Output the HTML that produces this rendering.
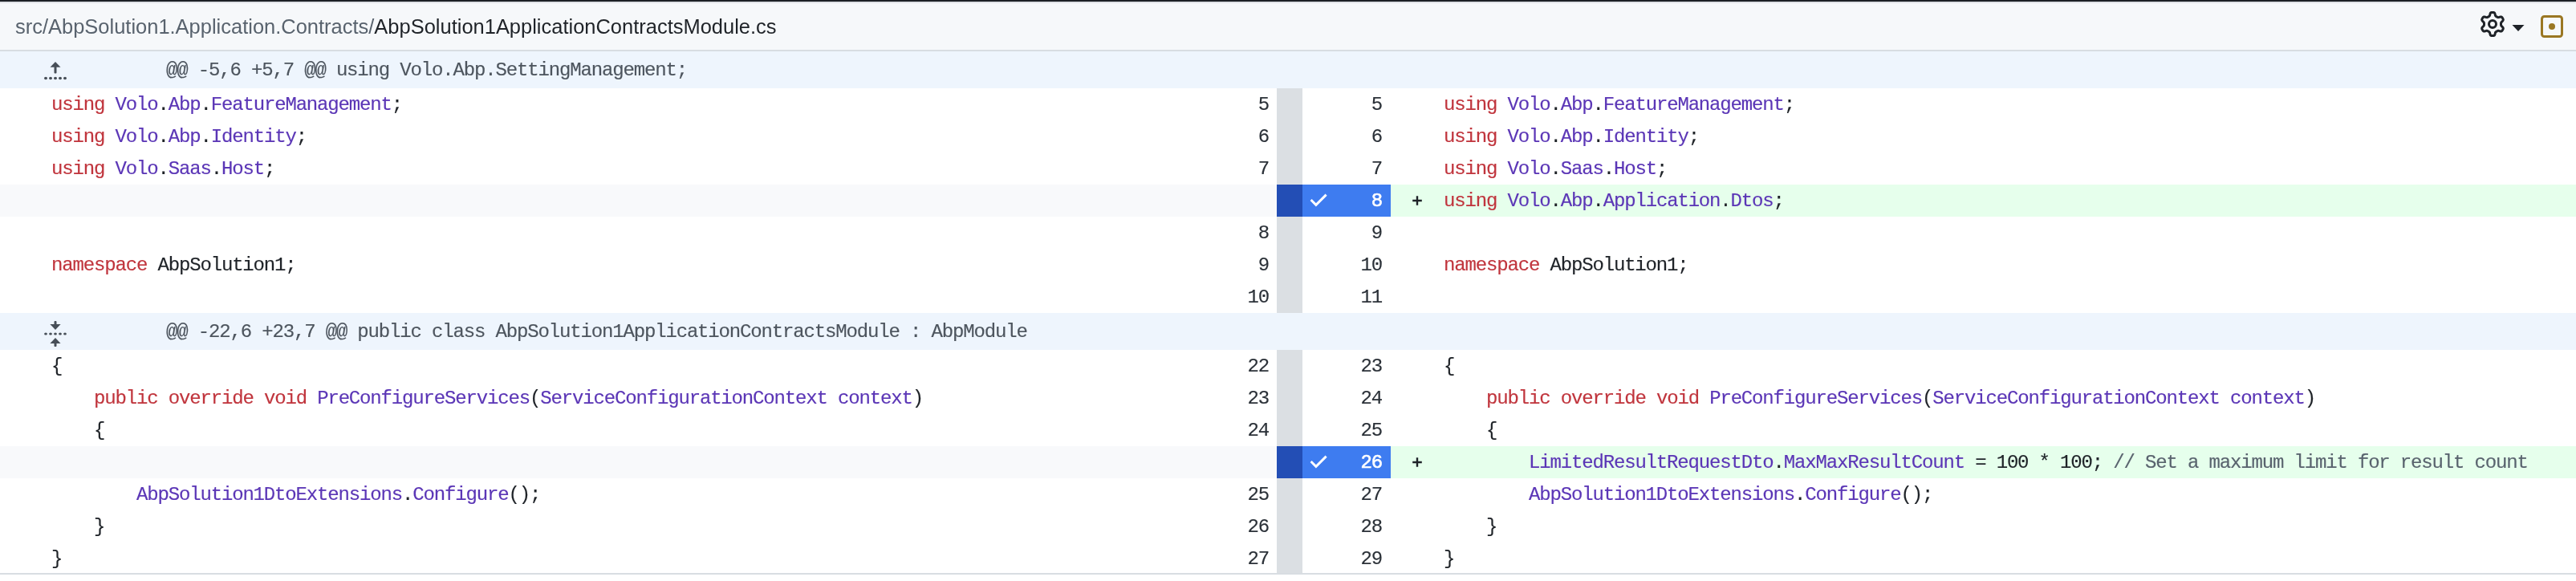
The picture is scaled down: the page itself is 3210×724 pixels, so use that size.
<!DOCTYPE html>
<html><head><meta charset="utf-8">
<style>
html,body{margin:0;padding:0;width:3210px;height:724px;overflow:hidden;background:#fff;position:relative}
.code,.ln,.htxt,#path,.plus{will-change:transform}
.code,.ln,.htxt,.plus{-webkit-text-stroke:0.15px currentColor}
*{box-sizing:border-box}
.abs{position:absolute}
#topdark{left:0;top:0;width:3210px;height:2px;background:#1c2025}
#toplight{left:0;top:2px;width:3210px;height:2px;background:#dfe2e6}
#hdr{left:0;top:4px;width:3210px;height:58px;background:#f6f8fa}
#hdrb{left:0;top:62px;width:3210px;height:2px;background:#d8dde2}
#path{left:19px;top:13px;line-height:40px;font-family:"Liberation Sans",sans-serif;font-size:25.48px;color:#59636e;white-space:pre}
#path b{font-weight:normal;color:#1f2328}
.hunk{left:0;width:3210px;height:46px;background:#eef5fd}
.htxt{left:207px;top:4px;line-height:40px;font-family:"Liberation Mono",monospace;font-size:24px;letter-spacing:-1.16px;color:#4d555e;white-space:pre}
.row{left:0;width:3210px;height:40px}
.code{position:absolute;top:1px;line-height:40px;font-family:"Liberation Mono",monospace;font-size:24px;letter-spacing:-1.16px;color:#1f2328;white-space:pre}
.lc{left:64px}
.rc{left:1799px}
.ln{position:absolute;top:1px;line-height:40px;font-family:"Liberation Mono",monospace;font-size:24px;letter-spacing:-1.16px;color:#2b3138;white-space:pre;text-align:right}
.lnl{left:1399.5px;width:181px}
.lnr{left:1599px;width:123px}
.gut{left:1591px;width:32px;background:#dbdfe3}
.k{color:#c0353d}
.e{color:#5b36b6}
.c{color:#59636e}
.empty{position:absolute;left:0;top:0;width:1591px;height:40px;background:#f8f9fb}
.selg{position:absolute;left:1591px;top:0;width:32px;height:40px;background:#234eb5}
.selb{position:absolute;left:1623px;top:0;width:110px;height:40px;background:#3e7cf0}
.add{position:absolute;left:1733px;top:0;width:1477px;height:40px;background:#e6ffec}
.plus{position:absolute;left:1760px;top:0;line-height:40px;font-family:"Liberation Mono",monospace;font-size:24px;color:#1f2328}
.chk{position:absolute;left:1632px;top:10px}
#botb{left:0;top:714px;width:3210px;height:2px;background:#d8dde2}
</style></head><body>
<div class="abs" id="topdark"></div>
<div class="abs" id="toplight"></div>
<div class="abs" id="hdr"></div>
<div class="abs" id="hdrb"></div>
<div class="abs" id="path">src/AbpSolution1.Application.Contracts/<b>AbpSolution1ApplicationContractsModule.cs</b></div>

<!-- gear -->
<svg class="abs" style="left:3090px;top:14px" width="32" height="32" viewBox="0 0 16 16"><path fill="#1f2328" d="M8 0a8.2 8.2 0 0 1 .701.031C9.444.095 9.99.645 10.16 1.29l.288 1.107c.018.066.079.158.212.224.231.114.454.243.668.386.123.082.233.09.299.071l1.103-.303c.644-.176 1.392.021 1.82.63.27.385.506.792.704 1.218.315.675.111 1.422-.364 1.891l-.814.806c-.049.048-.098.147-.088.294.016.257.016.515 0 .772-.01.147.038.246.088.294l.814.806c.475.469.679 1.216.364 1.891a7.977 7.977 0 0 1-.704 1.217c-.428.61-1.176.807-1.82.63l-1.102-.302c-.067-.019-.177-.011-.3.071a5.909 5.909 0 0 1-.668.386c-.133.066-.194.158-.211.224l-.29 1.106c-.168.646-.715 1.196-1.458 1.26a8.006 8.006 0 0 1-1.402 0c-.743-.064-1.289-.614-1.458-1.26l-.289-1.106c-.018-.066-.079-.158-.212-.224a5.738 5.738 0 0 1-.668-.386c-.123-.082-.233-.09-.299-.071l-1.103.303c-.644.176-1.392-.021-1.82-.63a8.12 8.12 0 0 1-.704-1.218c-.315-.675-.111-1.422.363-1.891l.815-.806c.05-.048.098-.147.088-.294a6.214 6.214 0 0 1 0-.772c.01-.147-.038-.246-.088-.294l-.815-.806C.635 6.045.431 5.298.746 4.623a7.92 7.92 0 0 1 .704-1.217c.428-.61 1.176-.807 1.820-.63l1.102.302c.067.019.177.011.3-.071.214-.143.437-.272.668-.386.133-.066.194-.158.211-.224l.29-1.106C6.009.645 6.556.095 7.299.03 7.530.01 7.764 0 8 0Zm-.571 1.525c-.036.003-.108.036-.137.146l-.289 1.105c-.147.561-.549.967-.998 1.189-.173.086-.34.183-.5.29-.417.278-.97.423-1.529.27l-1.103-.303c-.109-.03-.175.016-.195.045-.22.312-.412.644-.573.990-.014.031-.021.11.059.19l.815.806c.411.406.562.957.53 1.456a4.709 4.709 0 0 0 0 .582c.032.499-.119 1.05-.53 1.456l-.815.806c-.081.08-.073.159-.059.19.162.346.353.677.573.989.02.03.085.076.195.046l1.102-.303c.56-.153 1.113-.008 1.53.27.161.107.328.204.501.29.447.222.85.629.997 1.189l.289 1.105c.029.109.101.143.137.146a6.6 6.6 0 0 0 1.142 0c.036-.003.108-.036.137-.146l.289-1.105c.147-.561.549-.967.998-1.189.173-.086.34-.183.5-.29.417-.278.97-.423 1.529-.27l1.103.303c.109.029.175-.016.195-.045.22-.313.411-.644.573-.99.014-.031.021-.11-.059-.19l-.815-.806c-.411-.406-.562-.957-.53-1.456a4.709 4.709 0 0 0 0-.582c-.032-.499.119-1.05.53-1.456l.815-.806c.081-.08.073-.159.059-.19a6.464 6.464 0 0 0-.573-.989c-.02-.03-.085-.076-.195-.046l-1.102.303c-.56.153-1.113.008-1.53-.27a4.44 4.440 0 0 0-.501-.29c-.447-.222-.85-.629-.997-1.189l-.289-1.105c-.029-.11-.101-.143-.137-.146a6.6 6.6 0 0 0-1.142 0ZM11 8a3 3 0 1 1-6 0 3 3 0 0 1 6 0ZM9.5 8a1.5 1.5 0 1 0-3.001.001A1.5 1.5 0 0 0 9.5 8Z"/></svg>
<!-- caret -->
<svg class="abs" style="left:3130px;top:30px" width="16" height="10" viewBox="0 0 16 10"><path fill="#1f2328" d="M0.5 1 L15.5 1 L8 9 Z"/></svg>
<!-- square dot -->
<svg class="abs" style="left:3166px;top:19px" width="28" height="28" viewBox="0 0 28 28"><rect x="1.5" y="1.5" width="25" height="25" rx="3" fill="none" stroke="#9a7722" stroke-width="3"/><circle cx="14" cy="14" r="4" fill="#9a7722"/></svg>

<!-- gutter column -->
<div class="abs gut" style="top:110px;height:280px"></div>
<div class="abs gut" style="top:436px;height:280px"></div>

<!-- HUNK 1 -->
<div class="abs hunk" style="top:64px">
  <svg class="abs" style="left:50px;top:0" width="40" height="46" viewBox="0 0 40 46" fill="#474f58"><path d="M19 13 L25.5 19.8 L12.5 19.8 Z"/><rect x="17.5" y="19" width="3" height="8.6" rx="1"/><ellipse cx="7" cy="33.5" rx="2" ry="1.7"/><ellipse cx="13" cy="33.5" rx="2" ry="1.7"/><ellipse cx="19" cy="33.5" rx="2" ry="1.7"/><ellipse cx="25" cy="33.5" rx="2" ry="1.7"/><ellipse cx="31" cy="33.5" rx="2" ry="1.7"/></svg>
  <div class="abs htxt">@@ -5,6 +5,7 @@ using Volo.Abp.SettingManagement;</div>
</div>

<div class="abs row" style="top:110px">
  <div class="code lc"><span class="k">using</span> <span class="e">Volo</span>.<span class="e">Abp</span>.<span class="e">FeatureManagement</span>;</div>
  <div class="ln lnl">5</div><div class="ln lnr">5</div>
  <div class="code rc"><span class="k">using</span> <span class="e">Volo</span>.<span class="e">Abp</span>.<span class="e">FeatureManagement</span>;</div>
</div>
<div class="abs row" style="top:150px">
  <div class="code lc"><span class="k">using</span> <span class="e">Volo</span>.<span class="e">Abp</span>.<span class="e">Identity</span>;</div>
  <div class="ln lnl">6</div><div class="ln lnr">6</div>
  <div class="code rc"><span class="k">using</span> <span class="e">Volo</span>.<span class="e">Abp</span>.<span class="e">Identity</span>;</div>
</div>
<div class="abs row" style="top:190px">
  <div class="code lc"><span class="k">using</span> <span class="e">Volo</span>.<span class="e">Saas</span>.<span class="e">Host</span>;</div>
  <div class="ln lnl">7</div><div class="ln lnr">7</div>
  <div class="code rc"><span class="k">using</span> <span class="e">Volo</span>.<span class="e">Saas</span>.<span class="e">Host</span>;</div>
</div>
<div class="abs row" style="top:230px">
  <div class="empty"></div><div class="selg"></div><div class="selb"></div><div class="add"></div>
  <svg class="chk" width="24" height="20" viewBox="0 0 24 20"><path d="M1.6 9 L7.9 15.3 L20.6 2.6" fill="none" stroke="#fff" stroke-width="3" stroke-linecap="butt" stroke-linejoin="miter"/></svg>
  <div class="ln lnr" style="color:#fff;-webkit-text-stroke:0.6px #fff">8</div>
  <svg class="plus" style="left:1758px;top:12px" width="16" height="16" viewBox="0 0 16 16"><path d="M2.2 8 H13.8 M8 2.2 V13.8" stroke="#1f2328" stroke-width="2.4"/></svg>
  <div class="code rc"><span class="k">using</span> <span class="e">Volo</span>.<span class="e">Abp</span>.<span class="e">Application</span>.<span class="e">Dtos</span>;</div>
</div>
<div class="abs row" style="top:270px">
  <div class="ln lnl">8</div><div class="ln lnr">9</div>
</div>
<div class="abs row" style="top:310px">
  <div class="code lc"><span class="k">namespace</span> AbpSolution1;</div>
  <div class="ln lnl">9</div><div class="ln lnr">10</div>
  <div class="code rc"><span class="k">namespace</span> AbpSolution1;</div>
</div>
<div class="abs row" style="top:350px">
  <div class="ln lnl">10</div><div class="ln lnr">11</div>
</div>

<!-- HUNK 2 -->
<div class="abs hunk" style="top:390px">
  <svg class="abs" style="left:50px;top:0" width="40" height="46" viewBox="0 0 40 46" fill="#474f58"><rect x="17.5" y="10" width="3" height="5" rx="1"/><path d="M12.4 14.1 L25.6 14.1 L19 20.9 Z"/><ellipse cx="7" cy="26" rx="1.9" ry="1.6"/><ellipse cx="13" cy="26" rx="1.9" ry="1.6"/><ellipse cx="19" cy="26" rx="1.9" ry="1.6"/><ellipse cx="25" cy="26" rx="1.9" ry="1.6"/><ellipse cx="31" cy="26" rx="1.9" ry="1.6"/><path d="M19 31.1 L25.6 37.9 L12.4 37.9 Z"/><rect x="17.5" y="37" width="3" height="5" rx="1"/></svg>
  <div class="abs htxt">@@ -22,6 +23,7 @@ public class AbpSolution1ApplicationContractsModule : AbpModule</div>
</div>

<div class="abs row" style="top:436px">
  <div class="code lc">{</div>
  <div class="ln lnl">22</div><div class="ln lnr">23</div>
  <div class="code rc">{</div>
</div>
<div class="abs row" style="top:476px">
  <div class="code lc">    <span class="k">public</span> <span class="k">override</span> <span class="k">void</span> <span class="e">PreConfigureServices</span>(<span class="e">ServiceConfigurationContext</span> <span class="e">context</span>)</div>
  <div class="ln lnl">23</div><div class="ln lnr">24</div>
  <div class="code rc">    <span class="k">public</span> <span class="k">override</span> <span class="k">void</span> <span class="e">PreConfigureServices</span>(<span class="e">ServiceConfigurationContext</span> <span class="e">context</span>)</div>
</div>
<div class="abs row" style="top:516px">
  <div class="code lc">    {</div>
  <div class="ln lnl">24</div><div class="ln lnr">25</div>
  <div class="code rc">    {</div>
</div>
<div class="abs row" style="top:556px">
  <div class="empty"></div><div class="selg"></div><div class="selb"></div><div class="add"></div>
  <svg class="chk" width="24" height="20" viewBox="0 0 24 20"><path d="M1.6 9 L7.9 15.3 L20.6 2.6" fill="none" stroke="#fff" stroke-width="3" stroke-linecap="butt" stroke-linejoin="miter"/></svg>
  <div class="ln lnr" style="color:#fff;-webkit-text-stroke:0.6px #fff">26</div>
  <svg class="plus" style="left:1758px;top:12px" width="16" height="16" viewBox="0 0 16 16"><path d="M2.2 8 H13.8 M8 2.2 V13.8" stroke="#1f2328" stroke-width="2.4"/></svg>
  <div class="code rc">        <span class="e">LimitedResultRequestDto</span>.<span class="e">MaxMaxResultCount</span> = 100 * 100; <span class="c">// Set a maximum limit for result count</span></div>
</div>
<div class="abs row" style="top:596px">
  <div class="code lc">        <span class="e">AbpSolution1DtoExtensions</span>.<span class="e">Configure</span>();</div>
  <div class="ln lnl">25</div><div class="ln lnr">27</div>
  <div class="code rc">        <span class="e">AbpSolution1DtoExtensions</span>.<span class="e">Configure</span>();</div>
</div>
<div class="abs row" style="top:636px">
  <div class="code lc">    }</div>
  <div class="ln lnl">26</div><div class="ln lnr">28</div>
  <div class="code rc">    }</div>
</div>
<div class="abs row" style="top:676px">
  <div class="code lc">}</div>
  <div class="ln lnl">27</div><div class="ln lnr">29</div>
  <div class="code rc">}</div>
</div>
<div class="abs" id="botb"></div>
</body></html>
